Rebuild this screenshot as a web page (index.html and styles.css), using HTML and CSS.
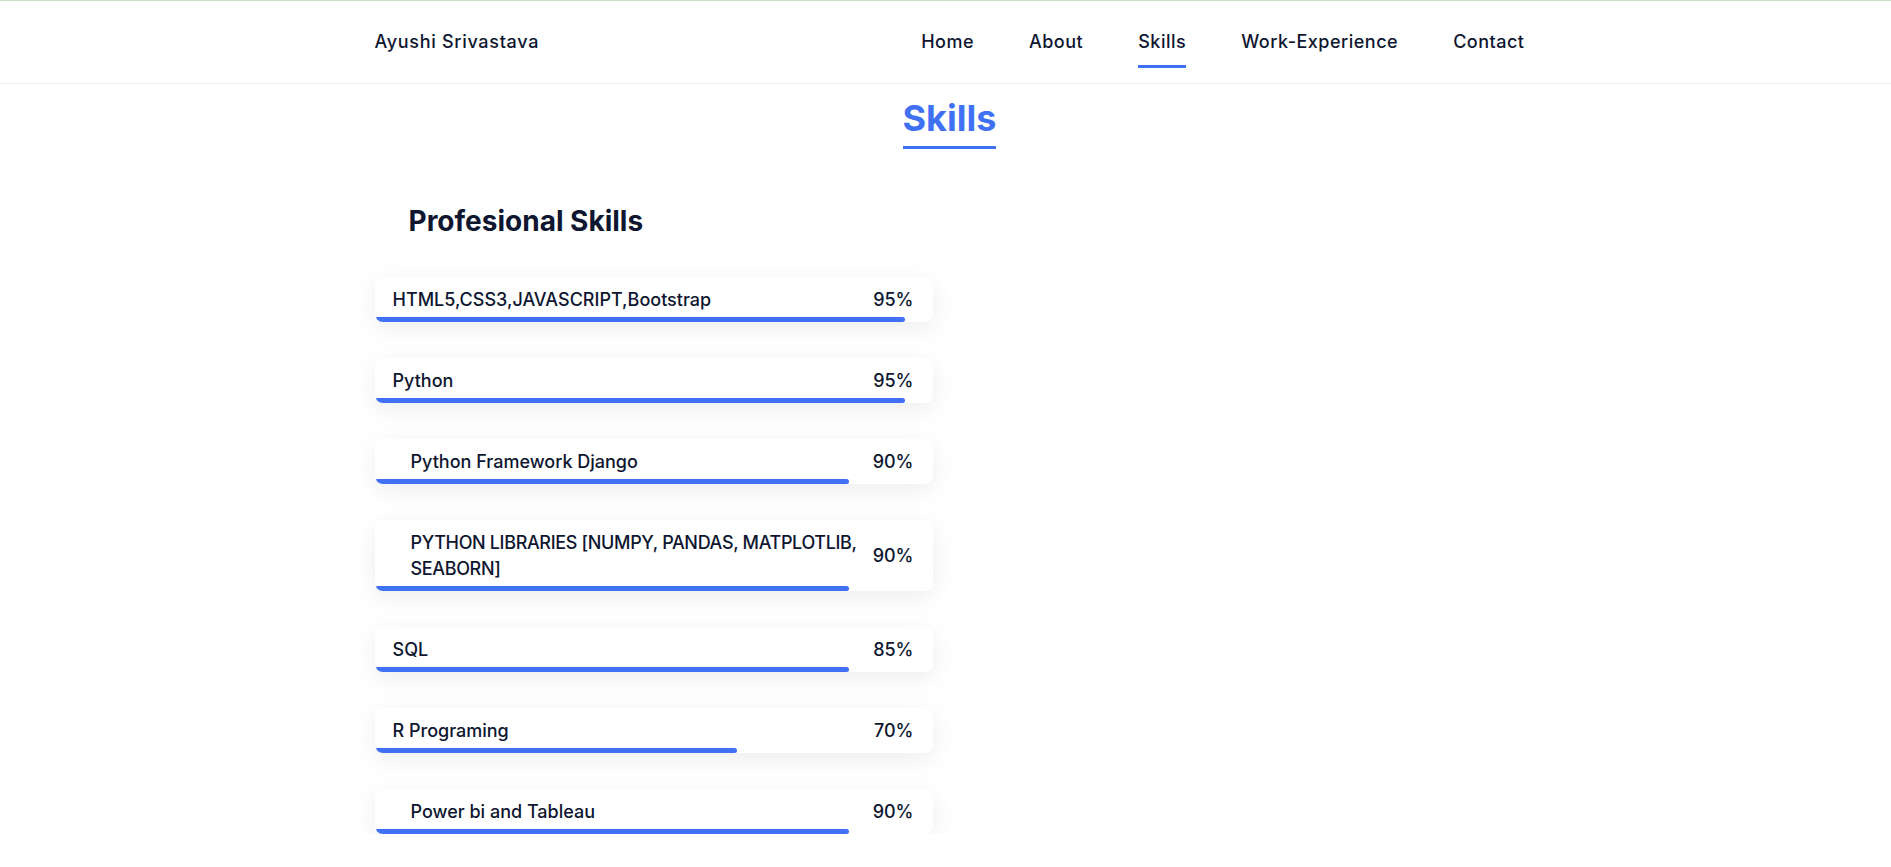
FILE: index.html
```html
<!DOCTYPE html>
<html lang="en">
<head>
<meta charset="utf-8">
<title>Ayushi Srivastava</title>
<link rel="stylesheet" href="styles.css">
</head>
<body>
<header class="header">
  <div class="container header-inner">
    <div class="brand">Ayushi Srivastava</div>
    <nav class="nav">
      <a class="nav-link" href="#">Home</a>
      <a class="nav-link" href="#">About</a>
      <a class="nav-link active" href="#">Skills</a>
      <a class="nav-link" href="#">Work-Experience</a>
      <a class="nav-link" href="#">Contact</a>
    </nav>
  </div>
</header>
<main class="container">
  <section class="skills">
    <div class="title-wrap"><h2 class="title">Skills</h2></div>
    <div class="skills-grid">
      <div class="skills-col">
        <h3 class="subtitle">Profesional Skills</h3>
        <div class="cards">
          <div class="card">
            <div class="card-row"><span class="label">HTML5,CSS3,JAVASCRIPT,Bootstrap</span><span class="pct">95%</span></div>
            <div class="bar" style="width:95%"></div>
          </div>
          <div class="card">
            <div class="card-row"><span class="label">Python</span><span class="pct">95%</span></div>
            <div class="bar" style="width:95%"></div>
          </div>
          <div class="card">
            <div class="card-row"><span class="label indent">Python Framework Django</span><span class="pct">90%</span></div>
            <div class="bar" style="width:85%"></div>
          </div>
          <div class="card">
            <div class="card-row"><span class="label indent tight">PYTHON LIBRARIES [NUMPY, PANDAS, MATPLOTLIB,<br>SEABORN]</span><span class="pct">90%</span></div>
            <div class="bar" style="width:85%"></div>
          </div>
          <div class="card">
            <div class="card-row"><span class="label">SQL</span><span class="pct">85%</span></div>
            <div class="bar" style="width:85%"></div>
          </div>
          <div class="card">
            <div class="card-row"><span class="label">R Programing</span><span class="pct">70%</span></div>
            <div class="bar" style="width:65%"></div>
          </div>
          <div class="card">
            <div class="card-row"><span class="label indent">Power bi and Tableau</span><span class="pct">90%</span></div>
            <div class="bar" style="width:85%"></div>
          </div>
        </div>
      </div>
      <div class="skills-col"></div>
    </div>
  </section>
</main>
</body>
</html>
```
FILE: styles.css
```css
* { box-sizing: border-box; }
html, body { margin: 0; padding: 0; }
body {
  font-family: Inter, "Noto Sans", sans-serif;
  color: #0e1630;
  background: #fff;
}
.container {
  width: 1150px;
  margin-left: calc(50% - 571px);
}
.header {
  border-top: 1px solid #c6e6c8;
  border-bottom: 1px solid #efefef;
  height: 84px;
}
.header-inner {
  display: flex;
  justify-content: space-between;
  align-items: flex-start;
}
.brand {
  font-size: 18px;
  font-weight: 500;
  letter-spacing: 0.7px;
  line-height: 26px;
  padding-top: 28px;
}
.nav { display: flex; gap: 55px; }
.nav-link {
  display: block;
  font-size: 18px;
  font-weight: 500;
  letter-spacing: 0.5px;
  line-height: 26px;
  padding-top: 28px;
  padding-bottom: 10px;
  color: #0e1630;
  text-decoration: none;
  border-bottom: 3px solid transparent;
}
.nav-link.active { border-bottom-color: #4070f4; }
.title-wrap { text-align: center; padding-top: 12px; }
.title {
  display: inline-block;
  margin: 0;
  font-size: 36px;
  font-weight: 700;
  line-height: 44px;
  color: #4070f4;
  padding-bottom: 6px;
  border-bottom: 3px solid #4070f4;
}
.skills-grid {
  display: grid;
  grid-template-columns: 558px 1fr;
}
.subtitle {
  margin: 0;
  padding: 52px 0 0 34px;
  font-size: 28px;
  font-weight: 700;
  line-height: 40px;
}
.cards {
  display: flex;
  flex-direction: column;
  gap: 36px;
  padding-top: 36px;
}
.card {
  background: #fff;
  border-radius: 8px;
  box-shadow: 0 6px 24px rgba(0, 0, 0, 0.075);
  padding-top: 10px;
  overflow: hidden;
}
.card-row {
  display: flex;
  justify-content: space-between;
  align-items: center;
  gap: 12px;
  padding: 0 19px 0 18px;
  margin-bottom: 4px;
}
.label, .pct {
  font-size: 18px;
  font-weight: 500;
  line-height: 26px;
}
.pct { flex-shrink: 0; }
.label.indent { padding-left: 18px; }
.label.tight { letter-spacing: -0.35px; white-space: nowrap; }
.bar {
  height: 5px;
  background: #4070f4;
  border-radius: 3px;
}
```
